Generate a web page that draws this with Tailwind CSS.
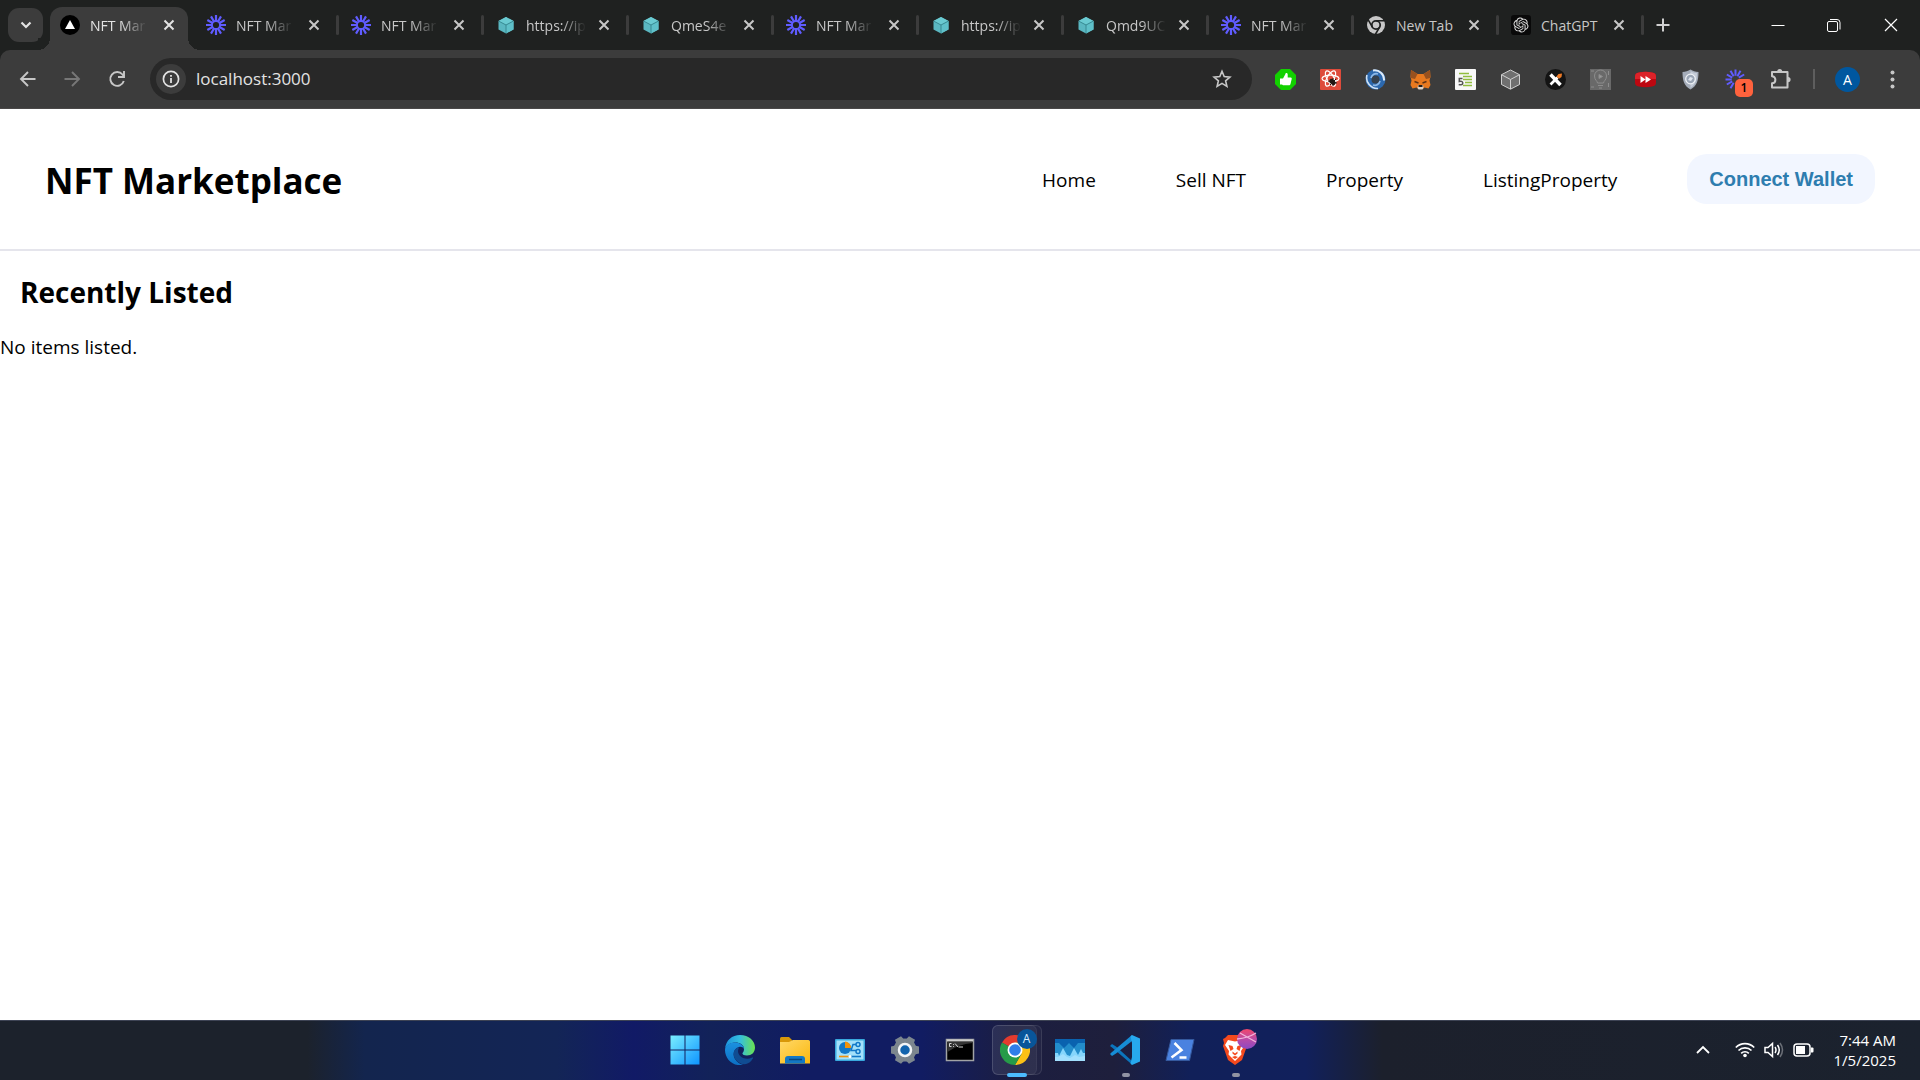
<!DOCTYPE html>
<html lang="en">
<head>
    <meta charset="UTF-8">
    <meta name="viewport" content="width=device-width, initial-scale=1.0">
    <title>NFT Marketplace</title>
    <script src="https://cdn.jsdelivr.net/npm/@tailwindcss/browser@4"></script>
</head>
<body class="flex h-screen flex-col overflow-hidden bg-white font-['Open_Sans','Noto_Sans',sans-serif] text-black">

    <!-- Shared icons -->
    <svg class="hidden">
        <symbol id="burst" viewBox="0 0 20 20">
            <g stroke="#605cff" stroke-width="2.2" fill="none">
                <circle cx="10" cy="10" r="4" stroke-width="1.8"/>
                <path d="M10 0v6M10 14v6M0 10h6M14 10h6"/>
                <path d="M10 0v6M10 14v6M0 10h6M14 10h6" transform="rotate(30 10 10)"/>
                <path d="M10 0v6M10 14v6M0 10h6M14 10h6" transform="rotate(60 10 10)"/>
            </g>
        </symbol>
        <symbol id="cube" viewBox="0 0 20 20">
            <path d="M10 2l7.5 4v8.5L10 18.5 2.5 14.5V6z" fill="#5ab7c1"/>
            <path d="M10 2l7.5 4L10 10 2.5 6z" fill="#6acad1"/>
            <path d="M10 10l7.5-4v8.5L10 18.5z" fill="#5fc0c9"/>
            <path d="M3 6.3l7 3.7 7-3.7M10 10v8" stroke="#388a93" fill="none"/>
        </symbol>
        <symbol id="close" viewBox="0 0 20 20">
            <path d="M5.500 5.500l9 9M14.500 5.500l-9 9" stroke="currentColor" stroke-width="2" fill="none"/>
        </symbol>
    </svg>

    <!-- Tab strip -->
    <div class="flex h-[50px] shrink-0 items-center bg-[#1f2120] pl-2 text-[14px] text-[#c7c7c7]">
        <button aria-label="Search tabs" class="mr-[7px] flex h-[34px] w-[35px] items-center justify-center rounded-[11px] bg-[#3c3c3c] text-[#e3e3e3]">
            <svg class="size-5" viewBox="0 0 20 20"><path d="M5.500 7.500l4.500 4.500 4.500-4.500" stroke="currentColor" stroke-width="2.200" fill="none"/></svg>
        </button>

        <div class="relative flex h-full w-[145px] items-center pl-[10px] text-[#e3e3e3]">
            <div class="absolute top-[7px] bottom-0 left-0 w-[138px] rounded-t-[12px] bg-[#3c3c3c]"></div>
            <div class="absolute bottom-0 -left-3 size-3 bg-[radial-gradient(circle_at_0_0,#1f2120_12px,#3c3c3c_12px)]"></div>
            <div class="absolute bottom-0 left-[138px] size-3 bg-[radial-gradient(circle_at_100%_0,#1f2120_12px,#3c3c3c_12px)]"></div>
            <svg class="relative size-5" viewBox="0 0 20 20"><circle cx="10" cy="10" r="10"/><path d="M10 5l5 9H5z" fill="#fff"/></svg>
            <span class="relative ml-[10px] w-[60px] whitespace-nowrap [mask-image:linear-gradient(to_right,#000_50%,transparent_95%)]">NFT Mar</span>
            <button aria-label="Close tab" class="relative ml-[9px]"><svg class="size-5"><use href="#close"/></svg></button>
        </div>
        <div class="flex w-[145px] items-center pl-[11px]">
            <svg class="size-5"><use href="#burst"/></svg>
            <span class="ml-[10px] w-[60px] whitespace-nowrap [mask-image:linear-gradient(to_right,#000_50%,transparent_95%)]">NFT Mar</span>
            <button aria-label="Close tab" class="ml-2"><svg class="size-5"><use href="#close"/></svg></button>
            <span class="mr-px ml-auto h-5 w-[3px] rounded-full bg-[#3c3c3c]"></span>
        </div>
        <div class="flex w-[145px] items-center pl-[11px]">
            <svg class="size-5"><use href="#burst"/></svg>
            <span class="ml-[10px] w-[60px] whitespace-nowrap [mask-image:linear-gradient(to_right,#000_50%,transparent_95%)]">NFT Mar</span>
            <button aria-label="Close tab" class="ml-2"><svg class="size-5"><use href="#close"/></svg></button>
            <span class="mr-px ml-auto h-5 w-[3px] rounded-full bg-[#3c3c3c]"></span>
        </div>
        <div class="flex w-[145px] items-center pl-[11px]">
            <svg class="size-5"><use href="#cube"/></svg>
            <span class="ml-[10px] w-[60px] whitespace-nowrap [mask-image:linear-gradient(to_right,#000_60%,transparent)]">https://ip</span>
            <button aria-label="Close tab" class="ml-2"><svg class="size-5"><use href="#close"/></svg></button>
            <span class="mr-px ml-auto h-5 w-[3px] rounded-full bg-[#3c3c3c]"></span>
        </div>
        <div class="flex w-[145px] items-center pl-[11px]">
            <svg class="size-5"><use href="#cube"/></svg>
            <span class="ml-[10px] w-[60px] whitespace-nowrap [mask-image:linear-gradient(to_right,#000_60%,transparent)]">QmeS4e</span>
            <button aria-label="Close tab" class="ml-2"><svg class="size-5"><use href="#close"/></svg></button>
            <span class="mr-px ml-auto h-5 w-[3px] rounded-full bg-[#3c3c3c]"></span>
        </div>
        <div class="flex w-[145px] items-center pl-[11px]">
            <svg class="size-5"><use href="#burst"/></svg>
            <span class="ml-[10px] w-[60px] whitespace-nowrap [mask-image:linear-gradient(to_right,#000_50%,transparent_95%)]">NFT Mar</span>
            <button aria-label="Close tab" class="ml-2"><svg class="size-5"><use href="#close"/></svg></button>
            <span class="mr-px ml-auto h-5 w-[3px] rounded-full bg-[#3c3c3c]"></span>
        </div>
        <div class="flex w-[145px] items-center pl-[11px]">
            <svg class="size-5"><use href="#cube"/></svg>
            <span class="ml-[10px] w-[60px] whitespace-nowrap [mask-image:linear-gradient(to_right,#000_60%,transparent)]">https://ip</span>
            <button aria-label="Close tab" class="ml-2"><svg class="size-5"><use href="#close"/></svg></button>
            <span class="mr-px ml-auto h-5 w-[3px] rounded-full bg-[#3c3c3c]"></span>
        </div>
        <div class="flex w-[145px] items-center pl-[11px]">
            <svg class="size-5"><use href="#cube"/></svg>
            <span class="ml-[10px] w-[60px] whitespace-nowrap [mask-image:linear-gradient(to_right,#000_60%,transparent)]">Qmd9UC</span>
            <button aria-label="Close tab" class="ml-2"><svg class="size-5"><use href="#close"/></svg></button>
            <span class="mr-px ml-auto h-5 w-[3px] rounded-full bg-[#3c3c3c]"></span>
        </div>
        <div class="flex w-[145px] items-center pl-[11px]">
            <svg class="size-5"><use href="#burst"/></svg>
            <span class="ml-[10px] w-[60px] whitespace-nowrap [mask-image:linear-gradient(to_right,#000_50%,transparent_95%)]">NFT Mar</span>
            <button aria-label="Close tab" class="ml-2"><svg class="size-5"><use href="#close"/></svg></button>
            <span class="mr-px ml-auto h-5 w-[3px] rounded-full bg-[#3c3c3c]"></span>
        </div>
        <div class="flex w-[145px] items-center pl-[11px]">
            <svg class="size-5" viewBox="0 0 20 20">
                <circle cx="10" cy="10" r="9" fill="#c7c7c7"/>
                <circle cx="10" cy="10" r="4.200" fill="#c7c7c7" stroke="#1f2120" stroke-width="1.800"/>
                <path d="M10 5.800h8.500M6.400 12.100L2.100 4.700M13.600 12.100L9.300 19.500" stroke="#1f2120" stroke-width="1.600"/>
            </svg>
            <span class="ml-[10px] w-[60px] whitespace-nowrap">New Tab</span>
            <button aria-label="Close tab" class="ml-2"><svg class="size-5"><use href="#close"/></svg></button>
            <span class="mr-px ml-auto h-5 w-[3px] rounded-full bg-[#3c3c3c]"></span>
        </div>
        <div class="flex w-[145px] items-center pl-[11px]">
            <svg class="size-5" viewBox="-4 -4 32 32">
                <rect x="-4" y="-4" width="32" height="32" rx="5" fill="#090909"/>
                <path fill="#e0e0e0" d="M22.2819 9.8211a5.9847 5.9847 0 0 0-.5157-4.9108 6.0462 6.0462 0 0 0-6.5098-2.9A6.0651 6.0651 0 0 0 4.9807 4.1818a5.9847 5.9847 0 0 0-3.9977 2.9 6.0462 6.0462 0 0 0 .7427 7.0966 5.98 5.98 0 0 0 .511 4.9107 6.051 6.051 0 0 0 6.5146 2.9001A5.9847 5.9847 0 0 0 13.2599 24a6.0557 6.0557 0 0 0 5.7718-4.2058 5.9894 5.9894 0 0 0 3.9977-2.9001 6.0557 6.0557 0 0 0-.7475-7.0729zm-9.022 12.6081a4.4755 4.4755 0 0 1-2.8764-1.0408l.1419-.0804 4.7783-2.7582a.7948.7948 0 0 0 .3927-.6813v-6.7369l2.02 1.1686a.071.071 0 0 1 .038.052v5.5826a4.504 4.504 0 0 1-4.4945 4.4944zm-9.6607-4.1254a4.4708 4.4708 0 0 1-.5346-3.0137l.142.0852 4.783 2.7582a.7712.7712 0 0 0 .7806 0l5.8428-3.3685v2.3324a.0804.0804 0 0 1-.0332.0615L9.74 19.9502a4.4992 4.4992 0 0 1-6.1408-1.6464zM2.3408 7.8956a4.485 4.485 0 0 1 2.3655-1.9728V11.6a.7664.7664 0 0 0 .3879.6765l5.8144 3.3543-2.0201 1.1685a.0757.0757 0 0 1-.071 0l-4.8303-2.7865A4.504 4.504 0 0 1 2.3408 7.872zm16.5963 3.8558L13.1038 8.364 15.1192 7.2a.0757.0757 0 0 1 .071 0l4.8303 2.7913a4.4944 4.4944 0 0 1-.6765 8.1042v-5.6772a.79.79 0 0 0-.407-.667zm2.0107-3.0231l-.142-.0852-4.7735-2.7818a.7759.7759 0 0 0-.7854 0L9.409 9.2297V6.8974a.0662.0662 0 0 1 .0284-.0615l4.8303-2.7866a4.4992 4.4992 0 0 1 6.6802 4.66zM8.3065 12.863l-2.02-1.1638a.0804.0804 0 0 1-.038-.0567V6.0742a4.4992 4.4992 0 0 1 7.3757-3.4537l-.142.0805L8.704 5.459a.7948.7948 0 0 0-.3927.6813zm1.0976-2.3654l2.602-1.4998 2.6069 1.4998v2.9994l-2.5974 1.4997-2.6067-1.4997Z"/>
            </svg>
            <span class="ml-[10px] w-[60px] whitespace-nowrap">ChatGPT</span>
            <button aria-label="Close tab" class="ml-2"><svg class="size-5"><use href="#close"/></svg></button>
            <span class="mr-px ml-auto h-5 w-[3px] rounded-full bg-[#3c3c3c]"></span>
        </div>
        <button aria-label="New tab" class="ml-2">
            <svg class="size-5" viewBox="0 0 20 20"><path d="M10 3.500v13M3.500 10h13" stroke="#d0d0d0" stroke-width="2"/></svg>
        </button>

        <div class="ml-auto flex h-full pb-px text-white">
            <button aria-label="Minimize" class="flex w-14 items-center justify-center">
                <svg class="size-4" viewBox="0 0 16 16"><path d="M1.500 8.500h13" stroke="currentColor"/></svg>
            </button>
            <button aria-label="Restore" class="flex w-14 items-center justify-center">
                <svg class="size-4" viewBox="0 0 16 16"><g fill="none" stroke="currentColor"><rect x="1.500" y="4.500" width="10" height="10" rx="1.500"/><path d="M4 2.500h7a3 3 0 0 1 3 3v7"/></g></svg>
            </button>
            <button aria-label="Close window" class="flex w-[58px] items-center justify-center">
                <svg class="size-4" viewBox="0 0 16 16"><path d="M2 2l12 12M14 2L2 14" stroke="currentColor" stroke-width="1.200"/></svg>
            </button>
        </div>
    </div>

    <!-- Toolbar -->
    <div class="shrink-0 bg-[#1f2120]">
        <div class="flex h-[59px] items-center rounded-t-[10px] border-b border-[#4a4848] bg-[#3c3c3c] pr-[17px] pl-[17px] text-[#c7c7c7]">
            <button aria-label="Back" class="mr-[22px]">
                <svg class="size-[22px]" viewBox="0 0 22 22"><path d="M18.500 11H4.500M11 4l-7 7 7 7" stroke="currentColor" stroke-width="1.900" fill="none"/></svg>
            </button>
            <button aria-label="Forward" class="mr-[23px] text-[#777]">
                <svg class="size-[22px]" viewBox="0 0 22 22"><path d="M3.500 11h14M11 4l7 7-7 7" stroke="currentColor" stroke-width="1.900" fill="none"/></svg>
            </button>
            <button aria-label="Reload" class="mr-[22px]">
                <svg class="size-[22px]" viewBox="0 0 22 22"><path d="M17.800 13A6.900 6.900 0 1 1 16.500 6.500L18 8" stroke="currentColor" stroke-width="1.900" fill="none"/><path d="M18 3v6h-6" stroke="currentColor" stroke-width="1.900" fill="none"/></svg>
            </button>

            <div class="flex h-[42px] flex-1 items-center rounded-full bg-[#282828] pr-5 pl-[6px]">
                <button aria-label="View site information" class="flex size-[30px] items-center justify-center rounded-full bg-[#3c3c3c] text-[#e3e3e3]">
                    <svg class="size-[18px]" viewBox="0 0 18 18"><circle cx="9" cy="9" r="7.600" fill="none" stroke="currentColor" stroke-width="1.700"/><path d="M9 8v5M9 5v1.800" stroke="currentColor" stroke-width="1.800"/></svg>
                </button>
                <input aria-label="Address" type="text" value="localhost:3000" class="ml-[10px] min-w-0 flex-1 bg-transparent text-[17px] text-[#e3e3e3] outline-none">
                <button aria-label="Bookmark this tab">
                    <svg class="size-5" viewBox="0 0 20 20"><path d="M10 2.300l2.200 5.300 5.700.5-4.300 3.700 1.300 5.600L10 14.400l-4.900 3 1.300-5.600-4.300-3.700 5.700-.5z" fill="none" stroke="currentColor" stroke-width="1.600"/></svg>
                </button>
            </div>

            <!-- Extensions -->
            <div class="ml-[23px] flex items-center gap-[24px]">
                <button aria-label="Extension"><svg class="size-[21px]" viewBox="0 0 21 21">
                    <path d="M6 0h9l6 6v9l-6 6H6l-6-6V6z" fill="#12d100"/>
                    <path d="M5 9.500h3l2.300-4.300c.2-1.800 2.400-1.500 2.400.3v3h3c1 0 1.200.8 1 1.500l-1.200 5c-.2.900-.7 1.200-1.500 1.200H8l-1-.6H5z" fill="#fff"/>
                </svg></button>
                <button aria-label="Extension"><svg class="size-[21px]" viewBox="0 0 21 21">
                    <rect width="21" height="21" rx="1" fill="#de4b3b"/>
                    <g fill="none" stroke="#fff" stroke-width="1.200"><ellipse cx="10.500" cy="9.500" rx="8.500" ry="3.400"/><ellipse cx="10.500" cy="9.500" rx="8.500" ry="3.400" transform="rotate(60 10.500 9.500)"/><ellipse cx="10.500" cy="9.500" rx="8.500" ry="3.400" transform="rotate(120 10.500 9.500)"/></g>
                    <ellipse cx="12.500" cy="13" rx="3.600" ry="2.400" transform="rotate(40 12.500 13)" fill="#211713"/>
                    <path d="M8 12l9 2M10 16l6-6M13 9v8" stroke="#211713"/>
                </svg></button>
                <button aria-label="Extension"><svg class="size-[21px]" viewBox="0 0 21 21">
                    <circle cx="10.500" cy="10.500" r="7" fill="none" stroke="#2c68ad" stroke-width="6"/>
                    <path d="M2 6C0 13 6 20 13 19.500" stroke="#cfe2f5" stroke-width="1.600" fill="none"/>
                    <path d="M8 1.500c6-1 11.500 3.500 11 10" stroke="#dceaf8" stroke-width="2" fill="none"/>
                    <path d="M6 9c1-3.500 4-5 7-4M15 12c-1 3.500-4 5-7 4" stroke="#8db8e6" stroke-width="1.800" fill="none"/>
                    <circle cx="10.500" cy="10.500" r="3.500" fill="#34414f"/>
                </svg></button>
                <button aria-label="Extension"><svg class="size-[21px]" viewBox="0 0 21 21">
                    <path d="M1 1l6.500 4h6L20 1l.5 7-1 3.500 1 4.500-2 3.500-4-1-2 1.500h-4l-2-1.500-4 1L.5 16l1-4.500L.5 8z" fill="#e8791f"/>
                    <path d="M1 1l6.500 4L5 10 .8 9zM20 1l-6.500 4 2.500 5 4.200-1z" fill="#98511f"/>
                    <path d="M4.500 12.500l4 1.500M16.500 12.500l-4 1.500" stroke="#5c3216" stroke-width="1.400"/>
                    <path d="M8 16h5l.5 3-1 1.500h-4l-1-1.500z" fill="#ddd1c5"/><path d="M8.500 16h4v2h-4z" fill="#251d18"/>
                </svg></button>
                <button aria-label="Extension"><svg class="size-[21px]" viewBox="0 0 21 21">
                    <rect width="21" height="21" rx="1" fill="#f8f8f8"/>
                    <path d="M4 4.500h10M8 7.500h9M8 10.500h9M10 13.500h7M8 16.500h9" stroke="#91bd3f" stroke-width="1.500"/>
                    <path d="M7.500 9.500H4.300v3c3-.5 3.700.5 3.400 2-.3 1.700-2.500 1.500-4 1" stroke="#555" stroke-width="1.500" fill="none"/>
                </svg></button>
                <button aria-label="Extension"><svg class="size-[21px]" viewBox="0 0 21 21">
                    <path d="M10.500 1l9 4.700v9.800l-9 4.700-9-4.700V5.700z" fill="#707070" stroke="#d0d0d0"/>
                    <path d="M1.500 5.700l9 4.800 9-4.800M10.500 10.500v9.500" fill="none" stroke="#d0d0d0"/>
                </svg></button>
                <button aria-label="Extension"><svg class="size-[21px]" viewBox="0 0 21 21">
                    <circle cx="10.500" cy="10.500" r="10.500" fill="#141414"/>
                    <path d="M5.500 5.500l10 10.500" stroke="#fff" stroke-width="3.400"/><path d="M5.500 15.500l7-7" stroke="#fff" stroke-width="2.600"/>
                    <path d="M11.500 7.500l2-2.500 3.500-.5-.5 3.500-2.500 1.800z" fill="#ef7a25"/>
                </svg></button>
                <button aria-label="Extension"><svg class="size-[21px]" viewBox="0 0 21 21">
                    <rect width="21" height="21" fill="#696969"/>
                    <g fill="none" stroke="#8d8d8d"><path d="M7.500 14c0-2-3-3-3-7a6 6 0 0 1 12 0c0 4-3 5-3 7zM8 16.500h5M9 19h3M1 2h3M1 18h3M18.500 2v4M18.500 14v4"/><path d="M9 5.500l3.500 2L9 9.500z" fill="#9a9a9a"/></g>
                </svg></button>
                <button aria-label="Extension"><svg class="size-[21px]" viewBox="0 0 21 21">
                    <path d="M4 3.500q6.500-1.500 13 0c3 .5 4 1.500 4 4v6c0 2.500-1 3.500-4 4q-6.500 1.300-13 0c-3-.5-4-1.500-4-4v-6c0-2.500 1-3.500 4-4z" fill="#bd0710"/>
                    <path d="M4 3.500q6.500-1.500 13 0c3 .5 4 1.500 4 4V10H0V7.500c0-2.500 1-3.500 4-4z" fill="#dc2229"/>
                    <path d="M5.500 7l5 3.500-5 3.500zM10.500 7l5.500 3.500-5.500 3.500z" fill="#fff"/>
                </svg></button>
                <button aria-label="Extension"><svg class="size-[21px]" viewBox="0 0 21 21">
                    <path d="M10.500.5c2.500 1.700 5 2.300 8 2.500 0 8-1.500 14-8 17.500C4 17 2.500 11 2.500 3c3-.2 5.500-.8 8-2.500z" fill="#a5adba"/>
                    <path d="M10.500 2c2 1.200 4 1.900 6.500 2 0 7-1.500 11.500-6.500 15z" fill="#c5ccd8"/>
                    <circle cx="10.500" cy="10" r="4.800" fill="#9aa5b5" stroke="#eef1f5" stroke-width="1.300"/><path d="M8 11l2-3 3 1-2 3z" fill="#dfe5ee"/>
                </svg></button>
                <button aria-label="Extension, 1 notification" class="relative">
                    <svg class="size-[21px]" viewBox="0 0 21 21"><path id="ray" d="M10.500.5v6.200" stroke="#605cff" stroke-width="2"/><use href="#ray" transform="rotate(30 10.500 10.500)"/><use href="#ray" transform="rotate(60 10.500 10.500)"/><use href="#ray" transform="rotate(-30 10.500 10.500)"/><use href="#ray" transform="rotate(-60 10.500 10.500)"/><use href="#ray" transform="rotate(-90 10.500 10.500)"/><use href="#ray" transform="rotate(-120 10.500 10.500)"/><use href="#ray" transform="rotate(-150 10.500 10.500)"/></svg>
                    <span class="absolute top-[10px] left-[10px] flex h-[18px] w-[18px] items-center justify-center rounded-[5px] bg-[#ff623d] text-[12px] font-semibold text-black">1</span>
                </button>
                <button aria-label="Extensions"><svg class="size-[21px]" viewBox="0 0 21 21">
                    <path d="M2 3h15.500v15.500H2v-4.200c4.500 0 4.500-7 0-7z" fill="none" stroke="currentColor" stroke-width="2" stroke-linejoin="round"/>
                    <path d="M7.200 2.500a2.500 2.500 0 0 1 5 0zM18 8a2.600 2.600 0 0 1 0 5.200z" fill="currentColor"/>
                </svg></button>
            </div>
            <span class="mr-5 ml-[22px] h-5 w-[2px] bg-[#5e5e5e]"></span>
            <button aria-label="Profile" class="flex size-[25px] items-center justify-center rounded-full bg-[#00579f] text-[14px] text-white">A</button>
            <button aria-label="Menu" class="ml-[22px]">
                <svg class="size-[21px]" viewBox="0 0 21 21" fill="currentColor"><circle cx="10.500" cy="3.500" r="2"/><circle cx="10.500" cy="10.500" r="2"/><circle cx="10.500" cy="17.500" r="2"/></svg>
            </button>
        </div>
    </div>

    <!-- Page -->
    <div class="flex-1">
        <nav class="flex h-[142px] items-center justify-between border-b-2 border-[#e5e5ec] px-[45px]">
            <h1 class="pt-1 text-[35px] font-bold">NFT Marketplace</h1>
            <div class="flex items-center gap-[70px]">
                <div class="flex gap-20 pt-[2px] text-[19px]">
                    <a href="#">Home</a>
                    <a href="#">Sell NFT</a>
                    <a href="#">Property</a>
                    <a href="#">ListingProperty</a>
                </div>
                <button class="h-[50px] rounded-[20px] bg-[#f2f6ff] px-[22px] font-['Liberation_Sans',sans-serif] text-[20px] font-bold text-[#2e7daf]">Connect Wallet</button>
            </div>
        </nav>
        <h2 class="mt-5 px-5 text-[28px] leading-[42px] font-bold">Recently Listed</h2>
        <p class="mt-5 text-[19px] leading-7">No items listed.</p>
    </div>

    <!-- Taskbar -->
    <footer class="grid h-[60px] shrink-0 grid-cols-[1fr_auto_1fr] items-center border-t border-[#3d4354] bg-[linear-gradient(90deg,#1c222c_0%,#1c222c_16%,#13254e_19%,#132556_29%,#111a66_33%,#122259_37%,#111c62_42%,#111c62_48%,#1c1e40_53%,#1e1f3c_58%,#112059_62%,#11205c_68%,#1c202c_72%,#1b222e_100%)] pb-px">
        <div></div>
        <div class="flex h-full">
            <button aria-label="Start" class="flex w-[55px] items-center justify-center">
                <svg class="size-[30px]" viewBox="0 0 30 30">
                    <defs><linearGradient id="win" x1="0" y1="0" x2="30" y2="30" gradientUnits="userSpaceOnUse"><stop stop-color="#7cefff"/><stop offset="1" stop-color="#0c93ff"/></linearGradient></defs>
                    <path d="M.5.500h14v14H.5zM15.500.500h14v14h-14zM.5 15.500h14v14H.5zM15.500 15.500h14v14h-14z" fill="url(#win)"/>
                </svg>
            </button>
            <button aria-label="Microsoft Edge" class="flex w-[55px] items-center justify-center">
                <svg class="size-[30px]" viewBox="0 0 30 30">
                    <defs>
                        <linearGradient id="edge-top" x1="0" y1=".5" x2="1" y2=".5"><stop stop-color="#1b92dd"/><stop offset=".5" stop-color="#35bfdf"/><stop offset="1" stop-color="#6be24f"/></linearGradient>
                        <linearGradient id="edge-side" x1="0" y1="0" x2="0" y2="1"><stop stop-color="#1b91e0"/><stop offset="1" stop-color="#0c6fc4"/></linearGradient>
                    </defs>
                    <path d="M0 14C1 5 7 0 15 0c9 0 15 6 15 12.500 0 5-3.500 8-8 8-3.500 0-5-1.500-4.500-2.500 1-1 1.500-2.500 1.500-4 0-4-4-6.500-8.500-6.500C6 7.500 1 10 0 14z" fill="url(#edge-top)"/>
                    <path d="M0 15c0-5 5-7.500 10-7.500 5 0 9 3 9 6.500-1-2-3-2.500-5-2-5 1.500-7 7-4 12 2 3.500 5.500 5.500 8 5.700C8 32 0 24 0 15z" fill="url(#edge-side)"/>
                    <path d="M12 12.700c-4 2.300-4.500 8.300-1 12.300 4 5 11 6 15.500.5l1.500-2.300c.3-.7-.3-1-.8-.7-6 3-13 0-14-5-.4-2 .2-3.800.8-4.800z" fill="#104c92"/>
                </svg>
            </button>
            <button aria-label="File Explorer" class="flex w-[55px] items-center justify-center">
                <svg class="size-[30px]" viewBox="0 0 30 30">
                    <defs><linearGradient id="folder" x1="0" y1="0" x2="1" y2="1"><stop stop-color="#ffd868"/><stop offset="1" stop-color="#fbb80e"/></linearGradient></defs>
                    <path d="M0 3.500Q0 2 1.500 2H9l3.500 3.500L9 8H0z" fill="#d89809"/>
                    <path d="M0 7h9l4-2h15.500Q30 5 30 6.500V28.500H0z" fill="url(#folder)"/>
                    <path d="M5 28.500V24q0-3 3-3h14q3 0 3 3v4.500z" fill="#1378c4"/><path d="M9 24.500h13" stroke="#08477f" stroke-width="1.500"/>
                </svg>
            </button>
            <button aria-label="Control Panel" class="flex w-[55px] items-center justify-center">
                <svg class="size-[30px]" viewBox="0 0 30 30">
                    <rect y="4" width="30" height="22" rx="1" fill="#39a8dd"/><rect x="1.500" y="5.500" width="27" height="19" fill="#a4e1fa"/>
                    <circle cx="10" cy="13" r="6" fill="#1278c8"/><path d="M10 13V6.500a6.500 6.500 0 0 1 6 6.500z" fill="#f2920b"/>
                    <g fill="none" stroke="#1278c8" stroke-width="1.500"><circle cx="23" cy="9.500" r="2"/><circle cx="23" cy="16.500" r="2"/><path d="M21 9.500h-3l-2 6h5"/></g>
                    <path d="M4 21.500h10" stroke="#f2920b" stroke-width="1.600"/><path d="M16 21.500h10" stroke="#1278c8" stroke-width="1.600"/><circle cx="15" cy="21.500" r="1.500" fill="#fff"/>
                </svg>
            </button>
            <button aria-label="Settings" class="flex w-[55px] items-center justify-center">
                <svg class="size-[30px]" viewBox="0 0 30 30">
                    <g fill="#7c868e"><circle cx="15" cy="15" r="11.500"/><path id="tooth" d="M10.500 5.500l1-4.500h7l1 4.500zM10.500 24.500l1 4.500h7l1-4.500z" transform="rotate(30 15 15)"/><use href="#tooth" transform="rotate(60 15 15)"/><use href="#tooth" transform="rotate(120 15 15)"/></g>
                    <circle cx="15" cy="15" r="6" fill="#1264ae" stroke="#f2f5f7" stroke-width="2.500"/>
                </svg>
            </button>
            <button aria-label="Terminal" class="flex w-[55px] items-center justify-center">
                <svg class="size-[30px]" viewBox="0 0 30 30">
                    <rect x="1.500" y="4.500" width="27" height="21" fill="#000" stroke="#a1a3a5" stroke-width="1.500"/><path d="M2 5.500h26" stroke="#cfcfcf" stroke-width="2"/>
                    <path d="M2.500 7h25v1q-14 1-25 9z" fill="#343434"/>
                    <path d="M6.500 8.500H4.500v3h2M8.500 9v.8M8.500 11v.800M10 8.500l3 3.500M13.500 12H18" stroke="#d5d5d5" fill="none"/>
                </svg>
            </button>
            <button aria-label="Google Chrome" class="relative flex w-[55px] items-center justify-center">
                <span class="absolute top-1 left-1 h-[50px] w-[50px] rounded-[6px] border border-white/10 bg-white/3"></span>
                <span class="absolute top-1 left-1 h-[50px] w-[45px] rounded-[6px] border border-white/5 bg-white/5"></span>
                <svg class="relative size-[30px]" viewBox="0 0 30 30">
                    <path d="M15 15L2 7.500A15 15 0 0 1 28 7.500H15z" fill="#e33b2e"/>
                    <path d="M15 15l6.500 3.700L15 30A15 15 0 0 0 28 7.500H15z" fill="#fbc116"/>
                    <path d="M2 7.500A15 15 0 0 0 15 30l6.500-11.300L15 15z" fill="#269b48"/>
                    <circle cx="15" cy="15" r="7.500" fill="#fff"/><circle cx="15" cy="15" r="5.800" fill="#2f7de9"/>
                </svg>
                <span class="absolute top-2 right-[6px] flex size-5 items-center justify-center rounded-full bg-[#08559a] text-[12px] text-[#d9edff]">A</span>
                <span class="absolute bottom-[2px] left-[19px] h-1 w-5 rounded-full bg-[#4cbcff]"></span>
            </button>
            <button aria-label="Performance Monitor" class="flex w-[55px] items-center justify-center">
                <svg class="size-[30px]" viewBox="0 0 30 30">
                    <path d="M0 4h30v22H0z" fill="#0a62af"/><path d="M0 8h4l5 5 5-5 5 5 4-5h7v18H0z" fill="#238dcb"/>
                    <path d="M0 18h3l1 3 4-8 4 7 3 1 4-8 4 7 3-6 2 4h2v8H0z" fill="#86d6fc"/><path d="M0 22h3l5-3 4 3 3 1 5-3 4 2 6-1v5H0z" fill="#b5e6ff" opacity=".6"/>
                </svg>
            </button>
            <button aria-label="Visual Studio Code" class="relative flex w-[55px] items-center justify-center">
                <svg class="size-[30px]" viewBox="0 0 30 30">
                    <path d="M0 11l2-2 4 2.500L22 26v3.500L2 12.500z" fill="#0b75bd"/><path d="M0 19l2 2 4-2.500L22 6V0L1.500 17.500z" fill="#168dd6"/>
                    <path d="M22 0l8 3.500v23L22 30l-1.500-1.500L22 22V8l-1.500-6.500z" fill="#27a9ee"/>
                </svg>
                <span class="absolute bottom-[2px] left-6 h-1 w-2 rounded-full bg-[#9193a3]"></span>
            </button>
            <button aria-label="PowerShell" class="flex w-[55px] items-center justify-center">
                <svg class="size-[30px]" viewBox="0 0 30 30">
                    <path d="M6 4.500h23L24.500 25.500H1z" fill="#4a82e0" stroke="#35599e"/>
                    <path d="M9.500 8l7 7L6.500 22.500M14.500 22.500h7" stroke="#fff" stroke-width="2.500" fill="none"/>
                </svg>
            </button>
            <button aria-label="Brave" class="relative flex w-[55px] items-center justify-center">
                <svg class="size-[30px]" viewBox="0 0 30 30">
                    <path d="M8 0h14l3 3 2 1-1 4 1 3-5 14-7 5-7-5L3 11l1-3-1-4 2-1z" fill="#f4491d"/>
                    <path d="M8 5l7 1.500L22 5l3 5-4 6 .5 3.500L15 26l-6.500-6.500L9 16l-4-6z" fill="#fff"/>
                    <path d="M8.500 10l4 1 1 3-3 2zM21.500 10l-4 1-1 3 3 2zM12.500 16.500l2.500 2 2.500-2v2L15 20.500l-2.500-2zM12 22l3-1 3 1-3 2z" fill="#f4491d"/>
                </svg>
                <svg class="absolute top-2 right-[6px] size-5" viewBox="0 0 20 20">
                    <defs><linearGradient id="planet" x1="0" y1="0" x2="0" y2="1"><stop stop-color="#f2476a"/><stop offset=".5" stop-color="#bb4ba6"/><stop offset="1" stop-color="#8b49c4"/></linearGradient></defs>
                    <circle cx="10" cy="10" r="10" fill="url(#planet)"/><path d="M0 10q11-1 19-6M3 4q7 4 16 9" stroke="#f2b4dc" fill="none" stroke-width="1.300"/>
                </svg>
                <span class="absolute bottom-[2px] left-6 h-1 w-2 rounded-full bg-[#9193a3]"></span>
            </button>
        </div>

        <div class="flex items-center justify-end pr-6 text-white">
            <button aria-label="Show hidden icons" class="mr-[22px]"><svg class="size-5" viewBox="0 0 20 20"><path d="M4 13l6-6 6 6" fill="none" stroke="currentColor" stroke-width="1.800"/></svg></button>
            <button aria-label="Network, volume and battery" class="mr-5 flex items-center gap-[9px]">
                <svg class="size-5" viewBox="0 0 20 20"><g fill="none" stroke="currentColor" stroke-width="1.700"><path d="M.8 7.500a13 13 0 0 1 18.400 0M3.500 10.500a9.200 9.200 0 0 1 13 0M6.200 13.300a5.400 5.400 0 0 1 7.600 0"/></g><circle cx="10" cy="15.500" r="1.800" fill="currentColor"/></svg>
                <svg class="size-5" viewBox="0 0 20 20"><g fill="none" stroke="currentColor" stroke-width="1.500"><path d="M1 7.500h3l4.500-4v13l-4.500-4H1zM11 7q2 3 0 6M13.500 5q3.500 5 0 10"/><path d="M16 3q5 7 0 14" opacity=".35"/></g></svg>
                <svg class="h-5 w-[21px]" viewBox="0 0 21 20"><rect x="1" y="4" width="16" height="12" rx="3" fill="none" stroke="currentColor" stroke-width="1.500"/><rect x="3" y="6" width="9" height="8" fill="currentColor"/><path d="M18 7.500h1.500q1 0 1 1v3q0 1-1 1H18z" fill="currentColor"/></svg>
            </button>
            <div class="text-right text-[15px] leading-5">
                <div>7:44 AM</div>
                <div>1/5/2025</div>
            </div>
        </div>
    </footer>
</body>
</html>
